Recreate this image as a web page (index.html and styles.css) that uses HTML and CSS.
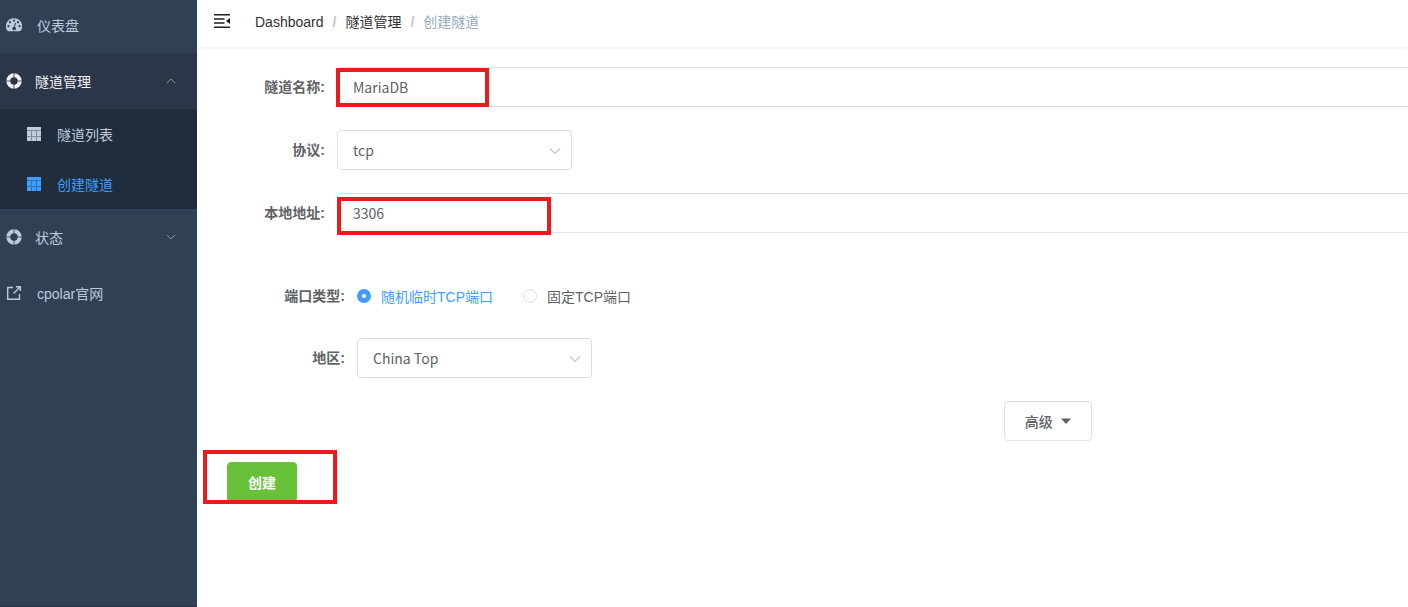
FILE: index.html
```
<!DOCTYPE html>
<html lang="zh-CN">
<head>
    <meta charset="UTF-8">
    <meta name="viewport" content="width=device-width, initial-scale=1.0">
    <title>创建隧道</title>
    <link rel="stylesheet" href="styles.css">
</head>
<body>

    <!-- shared icons -->
    <svg class="icon-defs" aria-hidden="true">
        <symbol id="icon-dashboard" viewBox="0 0 14 12">
            <path fill="currentColor" fill-rule="evenodd" d="M7 0a7 7 0 0 0-6 10.700c.3.500.7.800 1.200.800h9.600c.5 0 .9-.3 1.200-.8A7 7 0 0 0 7 0zM6 2.100a1 1 0 1 1 2 0a1 1 0 1 1-2 0zM2.500 3.600a1 1 0 1 1 2 0a1 1 0 1 1-2 0zM9.500 3.600a1 1 0 1 1 2 0a1 1 0 1 1-2 0zM1.100 7a1 1 0 1 1 2 0a1 1 0 1 1-2 0zM10.900 7a1 1 0 1 1 2 0a1 1 0 1 1-2 0zM7.900 4l.8.200-.8 3.500a1.600 1.600 0 1 1-.9-.2z"/>
        </symbol>
        <symbol id="icon-help" viewBox="0 0 16 16">
            <circle cx="8" cy="8" r="5.700" fill="none" stroke="currentColor" stroke-width="4"/>
            <path class="icon-cut" d="M8 0v6M8 10v6M0 8h6M10 8h6"/>
        </symbol>
        <symbol id="icon-grid" viewBox="0 0 14 14">
            <path fill="currentColor" d="M0 0h14v3H0zM0 4h4v5H0zM5 4h4v5H5zM10 4h4v5h-4zM0 10h4v4H0zM5 10h4v4H5zM10 10h4v4h-4z"/>
            <path fill="currentColor" opacity=".6" d="M0 3h14v11H0z"/>
        </symbol>
        <symbol id="icon-arrow" viewBox="0 0 12 12">
            <path fill="none" stroke="currentColor" stroke-width="1.200" d="M1 3.500l5 5 5-5"/>
        </symbol>
        <symbol id="icon-link" viewBox="0 0 14 14">
            <path fill="none" stroke="currentColor" stroke-width="1.400" d="M6 1.500H.700v11.800h11.800V8M6.500 7.500l6-6M9 .700h4.300V5"/>
        </symbol>
    </svg>

    <div class="app">
        <nav class="sidebar">
            <a class="menu-item menu-first" href="#">
                <svg class="menu-icon"><use href="#icon-dashboard"/></svg>
                <span class="menu-text">仪表盘</span>
            </a>
            <a class="menu-item menu-open" href="#">
                <svg class="help-icon"><use href="#icon-help"/></svg>
                <span>隧道管理</span>
                <svg class="menu-arrow arrow-up"><use href="#icon-arrow"/></svg>
            </a>
            <div class="submenu">
                <a class="submenu-item" href="#">
                    <svg class="grid-icon"><use href="#icon-grid"/></svg>
                    <span>隧道列表</span>
                </a>
                <a class="submenu-item active" href="#">
                    <svg class="grid-icon"><use href="#icon-grid"/></svg>
                    <span>创建隧道</span>
                </a>
            </div>
            <a class="menu-item" href="#">
                <svg class="help-icon"><use href="#icon-help"/></svg>
                <span>状态</span>
                <svg class="menu-arrow"><use href="#icon-arrow"/></svg>
            </a>
            <a class="menu-item" href="#">
                <svg class="menu-icon"><use href="#icon-link"/></svg>
                <span class="menu-text">cpolar官网</span>
            </a>
        </nav>

        <main class="main">
            <header class="navbar">
                <button class="hamburger" type="button" aria-label="menu">
                    <svg width="16" height="14" viewBox="0 0 16 14">
                        <path fill="none" stroke="currentColor" stroke-width="1.600" d="M0 .800h16M0 5h10.500M0 9h10.500M0 13.200h16"/>
                        <path fill="currentColor" d="M12 7l4-3v6z"/>
                    </svg>
                </button>
                <div class="breadcrumb">
                    <a href="#">Dashboard</a>
                    <span class="separator">/</span>
                    <a href="#">隧道管理</a>
                    <span class="separator">/</span>
                    <span class="current">创建隧道</span>
                </div>
            </header>

            <form class="tunnel-form">
                <div class="form-item">
                    <label class="form-label" for="name">隧道名称:</label>
                    <div class="control">
                        <input class="text-input" type="text" id="name" value="MariaDB">
                        <span class="mark mark-name"></span>
                    </div>
                </div>
                <div class="form-item">
                    <label class="form-label" for="protocol">协议:</label>
                    <div class="select-box">
                        <select id="protocol">
                            <option>tcp</option>
                        </select>
                        <svg class="select-arrow"><use href="#icon-arrow"/></svg>
                    </div>
                </div>
                <div class="form-item">
                    <label class="form-label" for="address">本地地址:</label>
                    <div class="control">
                        <input class="text-input" type="text" id="address" value="3306">
                        <span class="mark mark-address"></span>
                    </div>
                </div>

                <div class="port-section">
                    <div class="form-item" role="radiogroup" aria-labelledby="port-label">
                        <span class="form-label" id="port-label">端口类型:</span>
                        <div class="radio-group">
                            <label class="radio"><input type="radio" name="port" checked><span>随机临时TCP端口</span></label>
                            <label class="radio"><input type="radio" name="port"><span>固定TCP端口</span></label>
                        </div>
                    </div>
                    <div class="form-item">
                        <label class="form-label" for="region">地区:</label>
                        <div class="select-box">
                            <select id="region">
                                <option>China Top</option>
                            </select>
                            <svg class="select-arrow"><use href="#icon-arrow"/></svg>
                        </div>
                    </div>
                </div>

                <div class="actions">
                    <button class="btn btn-more" type="button">高级
                        <svg width="10" height="6" viewBox="0 0 10 6"><path fill="currentColor" d="M0 .500h10L5 6z"/></svg>
                    </button>

                    <div class="submit-row">
                        <button class="btn btn-create" type="submit">创建</button>
                        <span class="mark mark-create"></span>
                    </div>
                </div>
            </form>
        </main>
    </div>

</body>
</html>
```
FILE: styles.css
```
* {
    box-sizing: border-box;
}

body {
    margin: 0;
    font-family: "Liberation Sans", "Noto Sans CJK SC", sans-serif;
    font-size: 14px;
    color: #606266;
    background-color: #fff;
}

a {
    color: inherit;
    text-decoration: none;
}

.icon-defs {
    display: none;
}

.app {
    display: flex;
    min-height: 100vh;
}

/* sidebar */
.sidebar {
    flex: 0 0 197px;
    background-color: #304156;
    border-bottom: 1px solid #263445;
    color: #bfcbd9;
}

.menu-item {
    display: flex;
    align-items: center;
    height: 56px;
    padding: 0 20px 0 6px;
    --cut: #304156;
}

.menu-first {
    height: 53px;
    padding-bottom: 3px;
}

.menu-open {
    color: #f4f4f5;
    background-color: #2b3648;
    --cut: #2b3648;
}

.menu-icon {
    width: 16px;
    height: 14px;
    margin-right: 15px;
}

.help-icon {
    width: 16px;
    height: 16px;
    margin-right: 13px;
}

.icon-cut {
    stroke: var(--cut);
    stroke-width: 1;
    stroke-opacity: 0.8;
}

.menu-arrow {
    width: 12px;
    height: 10px;
    margin-left: auto;
    color: #909399;
}

.arrow-up {
    transform: rotate(180deg);
}

.submenu {
    background-color: #1f2d3d;
}

.submenu-item {
    display: flex;
    align-items: center;
    height: 50px;
    padding-left: 27px;
}

.submenu-item.active {
    color: #409eff;
}

.grid-icon {
    width: 14px;
    height: 14px;
    margin-right: 16px;
}

/* content */
.main {
    flex: 1;
    min-width: 0;
    overflow: hidden;
}

.navbar {
    display: flex;
    align-items: center;
    height: 47px;
    padding: 0 17px 5px;
    box-shadow: 0 1px 4px rgba(0, 21, 41, 0.08);
}

.hamburger {
    display: flex;
    margin-right: 25px;
    padding: 0;
    border: none;
    background: none;
    color: #1f1f1f;
}

.breadcrumb {
    display: flex;
    align-items: baseline;
    color: #303133;
}

.separator {
    margin: 0 9px;
    color: #c0c4cc;
    font-weight: bold;
}

.current {
    color: #97a8be;
}

/* the form is wider than the window, its right part is cut off */
.tunnel-form {
    display: flex;
    flex-direction: column;
    gap: 23px;
    width: 140%;
    padding: 20px 24px 20px 30px;
}

.form-item {
    display: flex;
    align-items: center;
    min-height: 40px;
}

.form-label {
    flex: 0 0 110px;
    padding: 0 12px 2px 0;
    font-weight: bold;
    text-align: right;
}

.control {
    position: relative;
    flex: 1;
}

.text-input,
.select-box select {
    display: block;
    width: 100%;
    height: 40px;
    padding: 0 15px;
    border: 1px solid #dcdfe6;
    border-radius: 4px;
    background-color: #fff;
    color: #606266;
    font-family: "Noto Sans CJK SC", sans-serif;
    font-size: 14px;
    outline: none;
    appearance: none;
}

.select-box {
    position: relative;
    width: 235px;
}

.select-arrow {
    position: absolute;
    top: 15px;
    right: 11px;
    width: 12px;
    height: 12px;
    color: #c0c4cc;
    pointer-events: none;
}

.port-section {
    display: flex;
    flex-direction: column;
    gap: 22px;
    padding: 20px 20px 0;
}

.radio-group {
    display: flex;
    gap: 30px;
}

.radio {
    display: flex;
    align-items: center;
    gap: 10px;
}

.radio input {
    width: 14px;
    height: 14px;
    margin: 0;
    border: 1px solid #dcdfe6;
    border-radius: 50%;
    background-color: #fff;
    appearance: none;
}

.radio input:checked {
    border: 5px solid #409eff;
}

.radio input:checked + span {
    color: #409eff;
}

.actions {
    display: flex;
    flex-direction: column;
    gap: 21px;
}

.btn {
    height: 40px;
    padding: 0 20px;
    border: 1px solid #dcdfe6;
    border-radius: 4px;
    background-color: #fff;
    color: #606266;
    font-family: inherit;
    font-size: 14px;
    font-weight: 500;
}

.btn-more {
    display: flex;
    align-items: center;
    align-self: center;
    gap: 8px;
}

.submit-row {
    position: relative;
}

.btn-create {
    border-color: #67c23a;
    background-color: #67c23a;
    color: #fff;
    font-weight: bold;
}

/* red frames round the fields to fill in */
.mark {
    position: absolute;
    border: 4px solid #e81b1e;
    pointer-events: none;
}

.mark-name {
    top: 1px;
    left: -1px;
    width: 153px;
    height: 39px;
}

.mark-address {
    top: 4px;
    left: 0;
    width: 214px;
    height: 38px;
}

.mark-create {
    top: -12px;
    left: -24px;
    width: 134px;
    height: 54px;
}
```
